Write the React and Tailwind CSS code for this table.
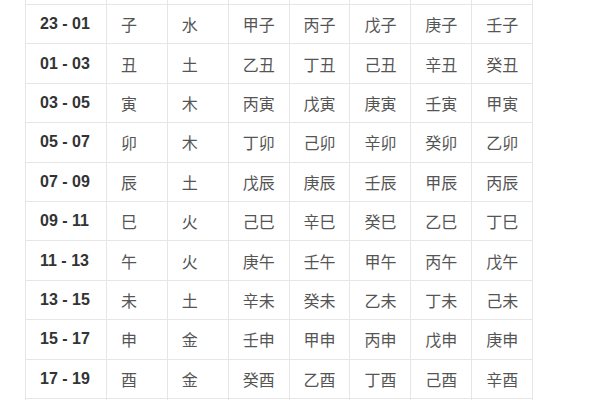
import React from "react";

const rows = [
  ["23 - 01", "子", "水", "甲子", "丙子", "戊子", "庚子", "壬子"],
  ["01 - 03", "丑", "土", "乙丑", "丁丑", "己丑", "辛丑", "癸丑"],
  ["03 - 05", "寅", "木", "丙寅", "戊寅", "庚寅", "壬寅", "甲寅"],
  ["05 - 07", "卯", "木", "丁卯", "己卯", "辛卯", "癸卯", "乙卯"],
  ["07 - 09", "辰", "土", "戊辰", "庚辰", "壬辰", "甲辰", "丙辰"],
  ["09 - 11", "巳", "火", "己巳", "辛巳", "癸巳", "乙巳", "丁巳"],
  ["11 - 13", "午", "火", "庚午", "壬午", "甲午", "丙午", "戊午"],
  ["13 - 15", "未", "土", "辛未", "癸未", "乙未", "丁未", "己未"],
  ["15 - 17", "申", "金", "壬申", "甲申", "丙申", "戊申", "庚申"],
  ["17 - 19", "酉", "金", "癸酉", "乙酉", "丁酉", "己酉", "辛酉"],
  ["", "", "", "", "", "", "", ""],
];

export default function App() {
  return (
    <div className="w-[600px] h-[400px] bg-white overflow-hidden">
      <div className="ml-[25px] w-[508px] bg-[#e6e6e6] px-px grid grid-cols-[80px_repeat(7,1fr)] auto-rows-[38.4px] grid-rows-[4px] gap-px">
        {Array.from({ length: 8 }).map((_, i) => (
          <div key={"t" + i} className="bg-white" />
        ))}
        {rows.map((r, ri) =>
          r.map((c, ci) => (
            <div
              key={ri + "-" + ci}
              className={
                ci === 0
                  ? "bg-white flex items-center pl-[14px] text-[16px] font-bold text-[#333] font-['Liberation_Sans',sans-serif]"
                  : "bg-white flex items-center pl-[14px] text-[16px] text-[#555] font-['Noto_Sans_CJK_SC',sans-serif]"
              }
            >
              {c}
            </div>
          ))
        )}
      </div>
    </div>
  );
}
